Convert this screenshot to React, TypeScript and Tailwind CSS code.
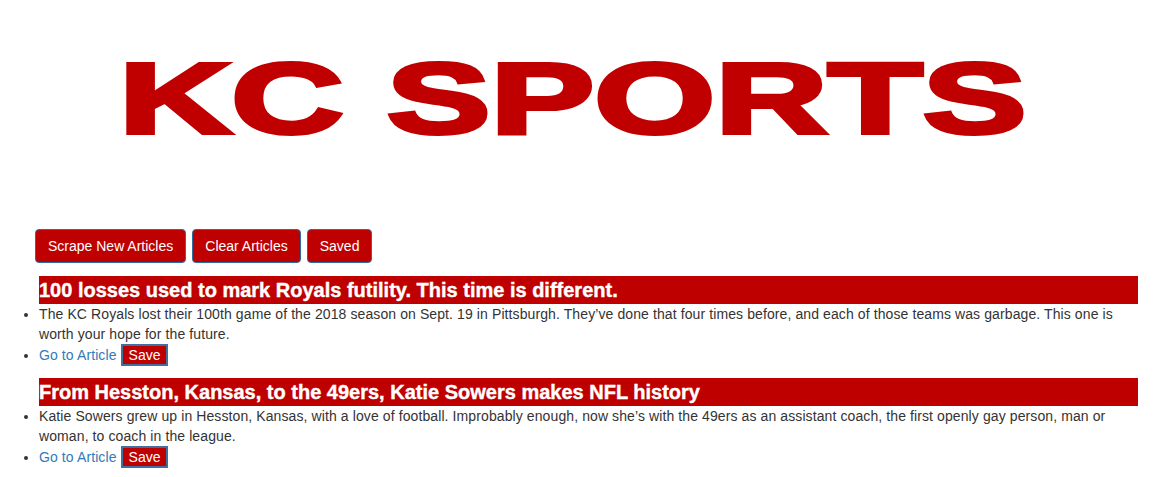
import React from "react";

const RED = "bg-[#bf0000]";

function Article({ title, body }: { title: string; body: string }) {
  return (
    <div>
      <h3 className={`${RED} h-[28px] text-[20px] leading-[28px] font-bold text-white whitespace-nowrap overflow-hidden [-webkit-text-stroke:0.4px_#ffffff]`}>
        {title}
      </h3>
      <ul className="list-disc list-outside text-[14px] leading-[20px] tracking-[0.1px] text-[#333333]">
        <li>{body}</li>
        <li>
          <a href="#" className="text-[#337ab7]">Go to Article</a>{" "}
          <button className="bg-[#bf0000] text-white text-[14px] leading-[16px] tracking-normal px-[6px] py-[1px] border-2 border-[#41709e]">
            Save
          </button>
        </li>
      </ul>
    </div>
  );
}

export default function App() {
  return (
    <div className="w-[1160px] h-[477px] bg-white overflow-hidden" style={{ fontFamily: '"Liberation Sans", Arial, sans-serif' }}>
      <div className="h-[229px] pt-[48px] pl-[119px]">
        <span className="inline-block origin-left scale-x-[1.54] text-[101px] leading-none font-bold text-[#c00000] whitespace-nowrap [-webkit-text-stroke:4px_#c00000]">
          KC SPORTS
        </span>
      </div>
      <div className="flex gap-[6px] pl-[35px]">
        {["Scrape New Articles", "Clear Articles", "Saved"].map((t) => (
          <button
            key={t}
            className="h-[34px] px-[12px] text-[14px] leading-[20px] text-white bg-[#bf0000] border border-[#2e6da4] rounded-[4px]"
          >
            {t}
          </button>
        ))}
      </div>
      <div className="pl-[39px] pr-[22px] pt-[13px] flex flex-col gap-[12px]">
        <Article
          title="100 losses used to mark Royals futility. This time is different."
          body="The KC Royals lost their 100th game of the 2018 season on Sept. 19 in Pittsburgh. They’ve done that four times before, and each of those teams was garbage. This one is worth your hope for the future."
        />
        <Article
          title="From Hesston, Kansas, to the 49ers, Katie Sowers makes NFL history"
          body="Katie Sowers grew up in Hesston, Kansas, with a love of football. Improbably enough, now she’s with the 49ers as an assistant coach, the first openly gay person, man or woman, to coach in the league."
        />
      </div>
    </div>
  );
}
